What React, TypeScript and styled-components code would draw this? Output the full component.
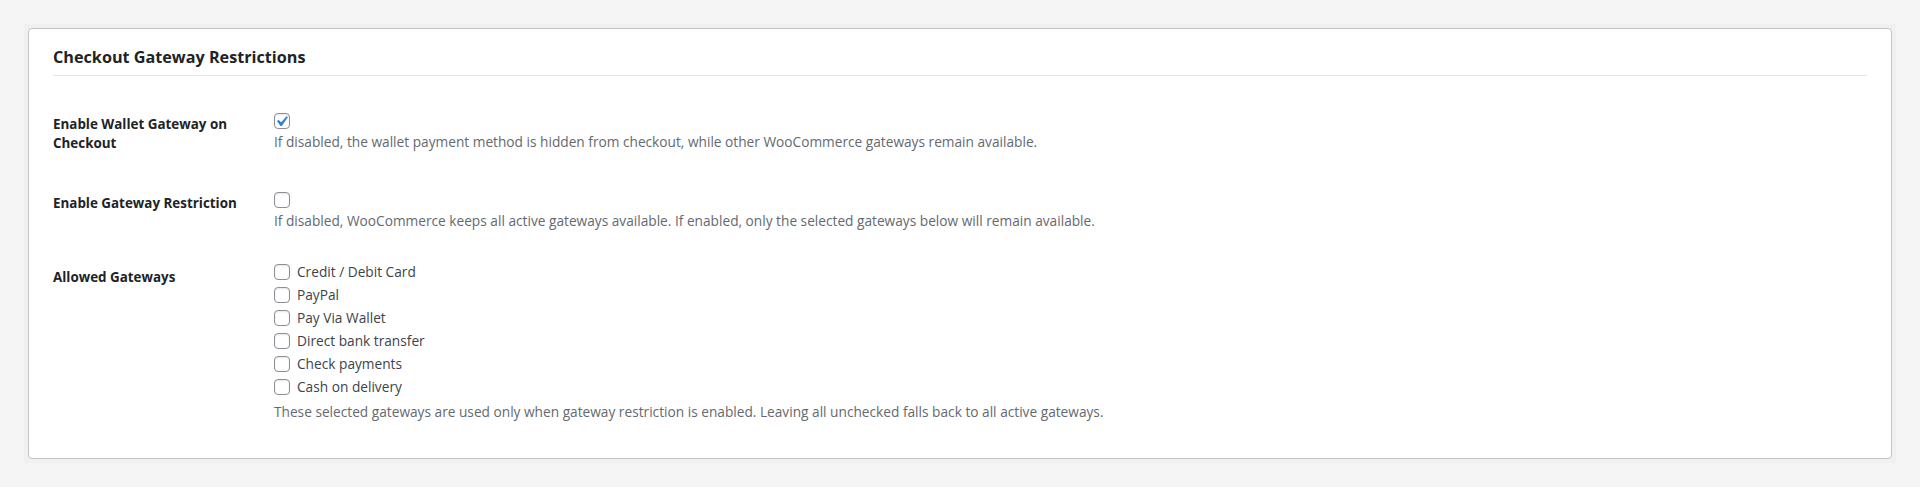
import React from "react";
import styled, { createGlobalStyle } from "styled-components";

const GlobalStyle = createGlobalStyle`
  html, body {
    margin: 0;
    padding: 0;
    background: #f5f5f6;
  }
  body {
    font-family: "Open Sans", "Noto Sans", Arial, sans-serif;
    color: #1d2327;
    -webkit-font-smoothing: antialiased;
  }
  * { box-sizing: border-box; }
`;

const Page = styled.div`
  margin: 24px;
  padding: 4px;
  background: #f0f0f1;
`;

const Card = styled.section`
  background: #ffffff;
  border: 1px solid #c3c4c7;
  border-radius: 4px;
  padding: 17px 24px 20px;
`;

const CardTitle = styled.h2`
  margin: 0;
  padding-bottom: 6px;
  border-bottom: 1px solid #e2e4e7;
  font-size: 16.2px;
  line-height: 23px;
  font-weight: 700;
  color: #1d2327;
`;

const FieldList = styled.div`
  margin-top: 17.5px;
  display: flex;
  flex-direction: column;
`;

const FieldRow = styled.div`
  display: grid;
  grid-template-columns: 221px 1fr;
  align-items: start;
`;

const FieldLabel = styled.div`
  padding: 21px 10px 19px 0;
  font-size: 13.4px;
  line-height: 19.6px;
  font-weight: 700;
  color: #1d2327;
  max-width: 210px;
`;

const FieldControl = styled.div<{ $list?: boolean }>`
  padding-top: ${(p) => (p.$list ? "13px" : "19.5px")};
  padding-bottom: 16px;
  display: flex;
  flex-direction: column;
`;

const CheckLine = styled.label<{ $list?: boolean }>`
  display: flex;
  align-items: center;
  gap: 7px;
  height: ${(p) => (p.$list ? "23px" : "16px")};
  font-size: 13.7px;
  line-height: 20px;
  color: #3c434a;
  cursor: pointer;
`;

const BoxWrap = styled.span`
  position: relative;
  display: inline-flex;
  width: 16px;
  height: 16px;
  flex: 0 0 16px;
`;

const BoxInput = styled.input`
  appearance: none;
  -webkit-appearance: none;
  margin: 0;
  width: 16px;
  height: 16px;
  border: 1px solid #8c8f94;
  border-radius: 4px;
  background: #ffffff;
  box-shadow: inset 0 1px 2px rgba(0, 0, 0, 0.1);
  cursor: pointer;
`;

const CheckMark = styled.svg`
  position: absolute;
  left: -3px;
  top: -2px;
  width: 21px;
  height: 21px;
  pointer-events: none;
`;

const Description = styled.p<{ $gap: number }>`
  margin: ${(p) => p.$gap}px 0 0;
  font-size: 13.7px;
  line-height: 20px;
  color: #646970;
`;

type BoxProps = { checked?: boolean };

function CheckBox({ checked = false }: BoxProps) {
  return (
    <BoxWrap>
      <BoxInput type="checkbox" defaultChecked={checked} />
      {checked && (
        <CheckMark viewBox="0 0 20 20" aria-hidden="true">
          <path
            d="M14.83 4.89l1.34.94-5.81 8.38H9.02L5.78 9.67l1.34-1.25 2.57 2.4z"
            fill="#3582c4"
          />
        </CheckMark>
      )}
    </BoxWrap>
  );
}

const gateways = [
  "Credit / Debit Card",
  "PayPal",
  "Pay Via Wallet",
  "Direct bank transfer",
  "Check payments",
  "Cash on delivery",
];

export default function App() {
  return (
    <>
      <GlobalStyle />
      <Page>
        <Card>
          <CardTitle>Checkout Gateway Restrictions</CardTitle>
          <FieldList>
            <FieldRow>
              <FieldLabel>Enable Wallet Gateway on Checkout</FieldLabel>
              <FieldControl>
                <CheckLine>
                  <CheckBox checked />
                </CheckLine>
                <Description $gap={3}>
                  If disabled, the wallet payment method is hidden from checkout, while other
                  WooCommerce gateways remain available.
                </Description>
              </FieldControl>
            </FieldRow>

            <FieldRow>
              <FieldLabel>Enable Gateway Restriction</FieldLabel>
              <FieldControl>
                <CheckLine>
                  <CheckBox />
                </CheckLine>
                <Description $gap={3}>
                  If disabled, WooCommerce keeps all active gateways available. If enabled, only
                  the selected gateways below will remain available.
                </Description>
              </FieldControl>
            </FieldRow>

            <FieldRow>
              <FieldLabel>Allowed Gateways</FieldLabel>
              <FieldControl $list>
                {gateways.map((g) => (
                  <CheckLine key={g} $list>
                    <CheckBox />
                    <span>{g}</span>
                  </CheckLine>
                ))}
                <Description $gap={4}>
                  These selected gateways are used only when gateway restriction is enabled.
                  Leaving all unchecked falls back to all active gateways.
                </Description>
              </FieldControl>
            </FieldRow>
          </FieldList>
        </Card>
      </Page>
    </>
  );
}
